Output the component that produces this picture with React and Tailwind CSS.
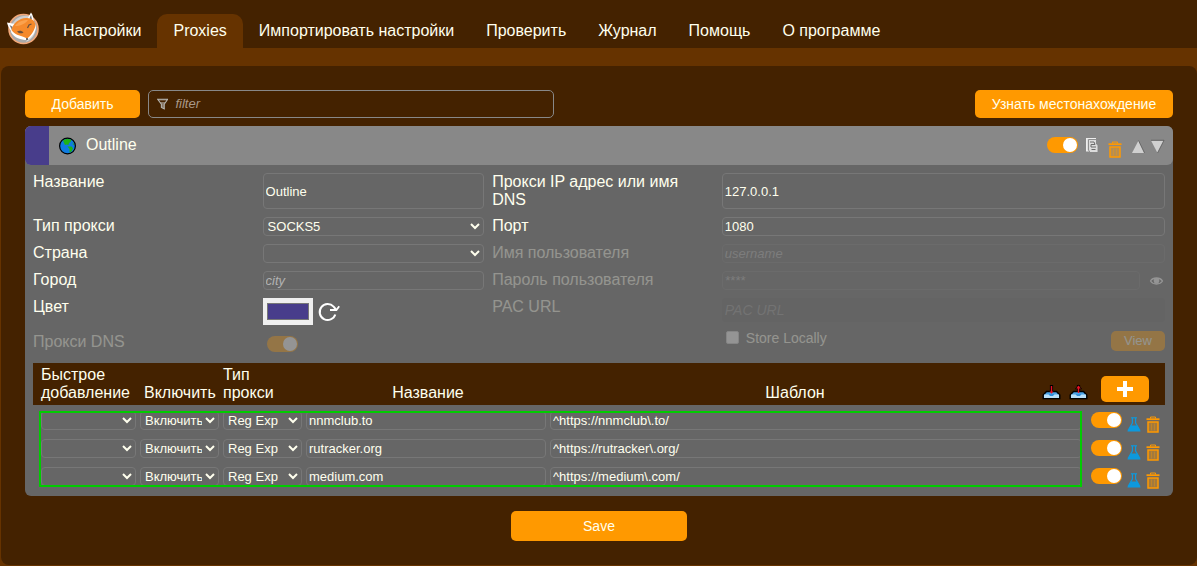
import { useState } from "react";

const TABS = [
  "Настройки",
  "Proxies",
  "Импортировать настройки",
  "Проверить",
  "Журнал",
  "Помощь",
  "О программе",
];

const PATTERNS = [
  { title: "nnmclub.to", pattern: "^https://nnmclub\\.to/" },
  { title: "rutracker.org", pattern: "^https://rutracker\\.org/" },
  { title: "medium.com", pattern: "^https://medium\\.com/" },
];

const field =
  "w-full min-w-0 rounded border border-[#777] bg-transparent px-[2px] text-[13px] leading-[17px] text-[#ffffee] placeholder:italic placeholder:text-[#b2b2b2]";
const dropdown =
  "h-[19px] w-full min-w-0 rounded border border-[#777] bg-[#666] text-[13px] leading-[17px] text-[#ffffee]";
const orangeButton = "rounded-[5px] bg-[#ff9900] text-sm text-[#ffffee]";

function FoxLogo() {
  return (
    <svg width="34" height="34" viewBox="0 0 34 34" aria-hidden="true">
      <circle cx="17.5" cy="18" r="14.5" fill="#a9a9a9" stroke="#f3a878" strokeWidth="1.6" />
      <path d="M6 14C9 7 16 4 23 5L22 8L9 15Z" fill="#cfcfcf" />
      <path d="M29 14C31 21 27 28 20 31L25 22Z" fill="#d6d6d6" />
      <path d="M1 11.5L9 13L6 21C3 18 1.5 14 1 11.5Z" fill="#fff" />
      <path d="M25 1.5C27 4 27.8 8 27.5 11L21.5 7.5Z" fill="#fff" />
      <path d="M3.5 14L7 16L6 19Z" fill="#777" />
      <path d="M25 4L26 8.5L23.5 7.5Z" fill="#777" />
      <path d="M5 21C6 17 9 12 15 9L27 9L30 15C30 21 26 26 21 29C15 29 8 27 5 21Z" fill="#fff" />
      <path d="M5.5 19C7 12 13 7.5 20 7C26 6.5 30 11 29.5 15C28 20 25 25 21 27.5C18 25 9 25 5.5 19Z" fill="#f58a2c" />
      <path d="M9 15C12 10.5 17 9 22 9C19 13 14 15 9 15Z" fill="#fba24e" />
      <path d="M11 20.5C13 19 16 19.5 17.5 21.5C15 23 13 22.5 11 20.5Z" fill="#6b513c" />
      <path d="M21.5 17L23 14L25.5 13" fill="none" stroke="#6b513c" strokeWidth="1.3" />
      <circle cx="21" cy="28" r="1" fill="#444" />
    </svg>
  );
}

function Globe() {
  return (
    <svg width="18" height="18" viewBox="0 0 18 18" aria-hidden="true">
      <circle cx="8.5" cy="9" r="7.9" fill="#0f7be0" stroke="#000" strokeWidth="1.2" />
      <path d="M4 3.5C6 1.6 10 1.4 12.5 3L11.5 5L10 6L9.5 8L7.5 7.5L6 8L5 6Z" fill="#1fb414" />
      <path d="M8.5 9.5L12.5 9.5L14 11.5L12.5 14.5L10.5 15.5L10.5 12Z" fill="#1fb414" />
      <path d="M13.8 5L15.2 8L13.8 7.5Z" fill="#1fb414" />
    </svg>
  );
}

function Trash() {
  return (
    <svg width="14" height="17" viewBox="0 0 14 17" fill="none" aria-hidden="true">
      <path d="M4.5 2.5V1H9.5V2.5" stroke="#ff9900" strokeWidth="1" />
      <path d="M0.5 3.2H13.5" stroke="#ff9900" strokeWidth="1.8" />
      <rect x="2" y="6" width="10" height="10" fill="#ff9900" fillOpacity="0.4" stroke="#ff9900" strokeWidth="1.5" />
      <path d="M5.5 7.5V14.5M8.5 7.5V14.5" stroke="#ff9900" strokeOpacity="0.4" strokeWidth="0.8" />
    </svg>
  );
}

function Flask() {
  return (
    <svg width="14" height="15" viewBox="0 0 14 15" aria-hidden="true">
      <path d="M4 0.8H10" stroke="#0d99dd" strokeWidth="1.2" />
      <path d="M5.4 1V6L1.4 13H12.6L8.6 6V1" fill="none" stroke="#0d99dd" strokeWidth="1.2" />
      <path d="M3.6 8.5H10.4L13.6 14.5H0.4Z" fill="#0d99dd" />
    </svg>
  );
}

function CopyIcon() {
  return (
    <svg width="20" height="17" viewBox="0 0 20 17" aria-hidden="true">
      <rect x="4.5" y="1.5" width="9" height="12.5" fill="#ddd" stroke="#eee" />
      <path d="M6.5 2.5H14.5V7L16 8V15.5H8L6.5 13Z" fill="#dcdcdc" stroke="#858585" strokeWidth="0.9" />
      <path d="M8 5H12L13 7.5H9V10H14M9.5 12.5H13.5" fill="none" stroke="#6b6b6b" strokeWidth="1" />
    </svg>
  );
}

function Tray({ up }) {
  return (
    <svg width="19" height="16" viewBox="0 0 19 16" aria-hidden="true">
      <path d="M4.5 7.5H14.5L17.8 11V14.5H1.2V11Z" fill="#4ba3e6" stroke="#000" strokeWidth="1.4" />
      <path d="M2 10.5H17V14H2Z" fill="#b9e0fa" />
      <path d="M6.5 10H12.5L11 12H8Z" fill="#318fdc" />
      <path d="M9.5 1V7" stroke="#000" strokeWidth="3.2" />
      {up && <path d="M5.8 5.2L9.5 0.6L13.2 5.2Z" fill="#000" />}
      <path d="M9.5 2V9" stroke="#e81123" strokeWidth="1.4" />
      <path d={up ? "M7.2 4.6L9.5 1.6L11.8 4.6Z" : "M7.6 7.4L9.5 9.8L11.4 7.4Z"} fill="#e81123" />
    </svg>
  );
}

function Toggle({ label, id, disabled }) {
  return (
    <input
      id={id}
      type="checkbox"
      aria-label={label}
      defaultChecked
      disabled={disabled}
      className="relative block h-4 w-[31px] shrink-0 appearance-none rounded-full bg-[#999] before:absolute before:top-px before:left-px before:size-[14px] before:rounded-full before:bg-white checked:bg-[#ff9900] checked:before:left-4"
    />
  );
}

function ProxyForm() {
  return (
    <div className="grid grid-cols-[1fr_1fr_1fr_2fr] gap-2 p-2 leading-[18px]">
      <label htmlFor="title">Название</label>
      <input id="title" className={field} defaultValue="Outline" />
      <label htmlFor="host">Прокси IP адрес или имя DNS</label>
      <input id="host" className={field} defaultValue="127.0.0.1" />

      <label htmlFor="type" className="h-[19px]">Тип прокси</label>
      <select id="type" className={dropdown}>
        <option>SOCKS5</option>
      </select>
      <label htmlFor="port">Порт</label>
      <input id="port" className={field} defaultValue="1080" />

      <label htmlFor="country" className="h-[19px]">Страна</label>
      <select id="country" className={dropdown}>
        <option></option>
      </select>
      <label htmlFor="username" className="opacity-30">Имя пользователя</label>
      <input id="username" className={`${field} opacity-30`} placeholder="username" disabled />

      <label htmlFor="city" className="h-[19px]">Город</label>
      <input id="city" className={field} placeholder="city" />
      <label htmlFor="password" className="opacity-30">Пароль пользователя</label>
      <div className="flex items-center gap-2 opacity-30">
        <input id="password" type="password" className={field} placeholder="****" disabled />
        <button aria-label="Показать пароль" disabled>
          <svg width="17" height="9" viewBox="0 0 17 9" aria-hidden="true">
            <path d="M2.5 5C5 1 12 1 14.5 5C12 9 5 9 2.5 5Z" fill="none" stroke="#fff" strokeWidth="1.3" />
            <circle cx="8.5" cy="4.8" r="2.8" fill="#fff" />
          </svg>
        </button>
      </div>

      <label htmlFor="color" className="h-[27px]">Цвет</label>
      <div className="flex h-[27px] items-center gap-1">
        <input
          id="color"
          type="color"
          defaultValue="#483d8b"
          className="h-[27px] w-[50px] border border-[#efefef] bg-[#efefef] px-px py-0"
        />
        <button aria-label="Случайный цвет">
          <svg width="24" height="24" viewBox="0 0 24 24" fill="none" aria-hidden="true">
            <path d="M18.3 14.5A8 8 0 1 1 16.6 6.6L19 9.5" stroke="#fff" strokeWidth="2" />
            <path d="M13 10H19.4L22.2 6.2" stroke="#fff" strokeWidth="1.8" />
          </svg>
        </button>
      </div>
      <label htmlFor="pac" className="opacity-30">PAC URL</label>
      <div className="row-span-2 flex flex-col gap-[9px]">
        <input
          id="pac"
          className="h-6 w-full rounded border border-[#646464] bg-[#646464] px-[2px] text-sm italic placeholder:text-[#737373]"
          placeholder="PAC URL"
          disabled
        />
        <div className="flex items-start justify-between opacity-30">
          <label className="flex items-start gap-[7px] pl-1 text-sm leading-[14px]">
            <input type="checkbox" disabled className="size-[13px] appearance-none rounded-[2px] border border-[#ccc] bg-white" />
            Store Locally
          </label>
          <button disabled className="h-5 w-[54px] rounded-[5px] bg-[#ff9900] text-[13px]">View</button>
        </div>
      </div>

      <label htmlFor="dns" className="h-5 opacity-30">Прокси DNS</label>
      <div className="pt-[3px] pl-1 opacity-30">
        <Toggle id="dns" disabled />
      </div>
    </div>
  );
}

function PatternTable() {
  return (
    <div className="relative px-2 pb-[5px]">
      <table className="w-full table-fixed border-separate border-spacing-x-0 border-spacing-y-[2px]">
        <colgroup>
          <col className="w-[105px]" />
          <col className="w-[83px]" />
          <col className="w-[83px]" />
          <col className="w-[244px]" />
          <col />
          <col className="w-[81px]" />
        </colgroup>
        <thead className="bg-[#442200] leading-[18px]">
          <tr className="h-[42px] text-left align-bottom *:pb-[3px] *:font-normal">
            <th className="pl-2">Быстрое добавление</th>
            <th className="pl-[6px]">Включить</th>
            <th className="pl-[2px]">Тип прокси</th>
            <th className="pl-1 text-center">Название</th>
            <th>
              <div className="-mr-1 flex items-end">
                <span className="grow text-center">Шаблон</span>
                <span className="flex gap-2 pb-[2px]">
                  <button aria-label="Импорт"><Tray /></button>
                  <button aria-label="Экспорт"><Tray up /></button>
                </span>
              </div>
            </th>
            <th className="pl-[17px]">
              <button aria-label="Добавить шаблон" className="flex h-[26px] w-12 items-center justify-center rounded-[5px] bg-[#ff9900]">
                <svg width="16" height="16" viewBox="0 0 16 16" aria-hidden="true">
                  <path d="M8 0V16M0 8H16" stroke="#fff" strokeWidth="4" />
                </svg>
              </button>
            </th>
          </tr>
        </thead>
        <tbody>
          {PATTERNS.map((row) => (
            <tr key={row.title} className="h-[26px] *:px-[2px]">
              <td className="pl-2!">
                <select aria-label="Быстрое добавление" className={`${dropdown} block`}>
                  <option></option>
                </select>
              </td>
              <td>
                <select aria-label="Включить" className={`${dropdown} block`}>
                  <option>Включить</option>
                </select>
              </td>
              <td>
                <select aria-label="Тип прокси" className={`${dropdown} block`}>
                  <option>Reg Exp</option>
                </select>
              </td>
              <td>
                <input aria-label="Название" className={`${field} block`} defaultValue={row.title} />
              </td>
              <td>
                <input aria-label="Шаблон" className={`${field} block`} defaultValue={row.pattern} />
              </td>
              <td>
                <div className="flex h-4 items-start gap-[5px] pl-[5px]">
                  <Toggle label="Включено" />
                  <button aria-label="Проверить" className="pt-[5px]"><Flask /></button>
                  <button aria-label="Удалить" className="pt-1"><Trash /></button>
                </div>
              </td>
            </tr>
          ))}
        </tbody>
      </table>
      {/* highlight around the patterns */}
      <div className="pointer-events-none absolute top-[50px] right-[91px] bottom-[9px] left-[14px] border-2 border-[#00cc00]"></div>
    </div>
  );
}

export default function App() {
  const [active, setActive] = useState("Proxies");

  return (
    <div className="min-h-screen bg-[#663300] pb-px font-['Liberation_Sans',Arial,sans-serif] text-base text-[#ffffee]">
      <nav className="flex h-12 items-end bg-[#442200] pl-[6px]">
        <div className="mr-[7px] self-center pt-2">
          <FoxLogo />
        </div>
        {TABS.map((tab) => (
          <a
            key={tab}
            href="#"
            onClick={() => setActive(tab)}
            className={`flex h-[34px] items-center rounded-t-[10px] px-4 whitespace-nowrap ${tab === active ? "bg-[#663300]" : ""}`}
          >
            {tab}
          </a>
        ))}
      </nav>

      <main className="mt-[18px] ml-px rounded-lg bg-[#442200] p-6">
        <div className="mb-2 flex h-7 gap-2">
          <button className={`${orangeButton} w-[115px]`}>Добавить</button>
          <label className="flex w-[406px] items-center gap-[7px] rounded-[5px] border border-[#888] px-2">
            <svg width="12" height="13" viewBox="0 0 12 13" aria-hidden="true">
              <path d="M0.7 1H11.3L7.6 6.2V11.2L4.6 9.6V6.2Z" fill="#887766" stroke="#b5b5b0" strokeWidth="1.1" />
              <path d="M2.5 2.2H9.5L8.4 3.8H3.6Z" fill="#442200" />
            </svg>
            <input
              aria-label="filter"
              placeholder="filter"
              className="w-full min-w-0 bg-transparent text-[13px] outline-none placeholder:text-[#aa9988] placeholder:italic"
            />
          </label>
          <button className={`${orangeButton} ml-auto w-[198px]`}>Узнать местонахождение</button>
        </div>

        <section className="rounded-[6px] bg-[#666]">
          <header className="flex h-[39px] items-center rounded-[6px] bg-[#888] pr-[7px]">
            <span className="h-full w-6 rounded-l-[6px] bg-[#483d8b]"></span>
            <span className="flex grow items-center gap-[9px] pl-[10px]">
              <Globe />
              <span className="pb-[2px]">Outline</span>
            </span>
            <div className="flex items-center gap-1 pb-px">
              <Toggle label="Включить прокси" />
              <button aria-label="Копировать"><CopyIcon /></button>
              <button aria-label="Удалить" className="w-5 pt-2 pl-[2px]"><Trash /></button>
              <button aria-label="Вверх">
                <svg width="16" height="16" viewBox="0 0 16 16" aria-hidden="true">
                  <path d="M8.5 3.5L14.5 16H2Z" fill="#d0d0d0" />
                  <path d="M8.5 3.5L14.5 16" stroke="#555" strokeWidth="0.8" />
                </svg>
              </button>
              <button aria-label="Вниз">
                <svg width="16" height="16" viewBox="0 0 16 16" aria-hidden="true">
                  <path d="M1 3.5H14L7.5 16Z" fill="#d0d0d0" />
                  <path d="M1 3.3H14L7.5 16" fill="none" stroke="#555" strokeWidth="0.8" />
                </svg>
              </button>
            </div>
          </header>
          <ProxyForm />
          <PatternTable />
        </section>

        <div className="mt-[15px] flex justify-center">
          <button className={`${orangeButton} h-[30px] w-44`}>Save</button>
        </div>
      </main>
    </div>
  );
}
